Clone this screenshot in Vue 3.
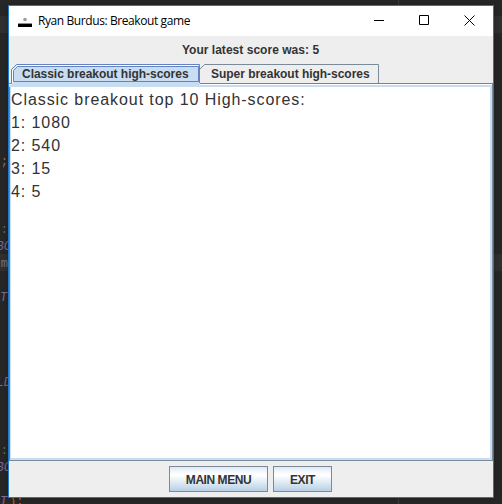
<script setup>
import { ref } from 'vue'

const code = {
  9: { text: ';', kind: 'orange' },
  13: { text: ':', kind: 'green' },
  14: { text: 'BC', kind: 'purple', clipped: true },
  15: { text: 'm', kind: 'plain' },
  17: { text: 'T', kind: 'purple', start: true },
  22: { text: 'LD', kind: 'purple', clipped: true },
  26: { text: ':', kind: 'green' },
  27: { text: 'BC', kind: 'purple', clipped: true },
  29: { text: 'T', kind: 'purple', start: true, tail: '):' },
}
const lines = Array.from({ length: 30 }, (_, i) => ({
  ...(code[i] || { text: '', kind: 'plain' }),
  current: i === 1 || i === 15,
}))

const tabs = [
  { title: 'Classic breakout high-scores', heading: 'Classic breakout top 10 High-scores:', scores: [1080, 540, 15, 5] },
  { title: 'Super breakout high-scores', heading: 'Super breakout top 10 High-scores:', scores: [] },
]
const active = ref(0)
</script>

<template>
  <div class="desktop">
    <div class="editor" aria-hidden="true">
      <div v-for="(line, i) in lines" :key="i" class="line" :class="{ current: line.current, clipped: line.clipped, start: line.start }">
        <span :class="line.kind">{{ line.text }}</span><span v-if="line.tail" class="orange tail">{{ line.tail }}</span>
      </div>
      <div class="margin-guide"></div>
    </div>

    <main class="window">
      <header class="titlebar">
        <svg class="app-icon" width="16" height="16" viewBox="0 0 16 16">
          <circle cx="8" cy="5.5" r="1.8" fill="#a39a9e" />
          <rect x="1" y="9" width="14" height="1" fill="#909090" />
          <rect x="1" y="10" width="14" height="3" fill="#000" />
        </svg>
        <span class="title">Ryan Burdus: Breakout game</span>
        <div class="controls">
          <svg width="11" height="11" viewBox="0 0 11 11"><path d="M0 5.5H10" /></svg>
          <svg width="11" height="11" viewBox="0 0 11 11"><path d="M.5 .5H9.5V9.5H.5Z" /></svg>
          <svg width="11" height="11" viewBox="0 0 11 11"><path d="M.5 .5L10.5 10.5M10.5 .5L.5 10.5" /></svg>
        </div>
      </header>

      <div class="latest"><span>Your latest score was: 5</span></div>

      <nav class="tabs">
        <button class="tab first" @click="active = 0">
          <svg class="tab-frame" width="191" height="23" viewBox="0 0 191 23">
            <path d="M2 20V6L8 0H191V23H0V20Z" fill="#c8ddf2" />
            <path d="M0 19.5H2.5V5.5L7.5 .5H190.5V19" class="outer" />
            <path d="M3.5 19V6L8 1.5H189.5" class="shine" />
            <path d="M4.5 17.5V6.5L8.5 2.5H189.5V17.5Z" class="outer" />
            <path d="M0 20.5H2.5" class="shine" />
          </svg>
          <span class="tab-label">{{ tabs[0].title }}</span>
        </button>
        <button class="tab second" @click="active = 1">
          <svg class="tab-frame" width="180" height="20" viewBox="0 0 180 20">
            <path d="M.5 5.5L5.5 .5H179.5V19" class="idle" />
          </svg>
          <span class="tab-label">{{ tabs[1].title }}</span>
        </button>
      </nav>

      <section class="pane">
        <div class="scores">
          <div>{{ tabs[active].heading }}</div>
          <div v-for="(score, i) in tabs[active].scores" :key="i">{{ i + 1 }}: {{ score }}</div>
        </div>
      </section>

      <footer class="actions">
        <button class="metal menu"><span>MAIN MENU</span></button>
        <button class="metal exit"><span>EXIT</span></button>
      </footer>
    </main>
  </div>
</template>

<style>
body { margin: 0; overflow: hidden; }
</style>

<style scoped>
* { box-sizing: border-box; }
button { margin: 0; padding: 0; border: 0; background: none; color: #333; }
.desktop {
  position: relative;
  width: 502px;
  height: 504px;
  padding: 5px 8px 6px;
  overflow: hidden;
  background: #272727;
}
.editor {
  position: absolute;
  inset: -1px 0 0;
  overflow: hidden;
  font: 12px/20px "Liberation Mono", monospace;
}
.line { display: flex; height: 17px; white-space: pre; }
.line > span:first-child { width: 8px; display: flex; justify-content: flex-end; }
.line.start > span:first-child { justify-content: flex-start; }
.line.clipped > span:first-child { width: 11px; }
.line > .tail { width: auto; margin-left: 1px; }
.current { background: #303030; }
.purple { color: #80699a; font-style: italic; }
.orange { color: #b8692f; }
.green { color: #577350; }
.plain { color: #777; }
.margin-guide { position: absolute; left: 398px; top: 0; width: 1px; height: 100%; background: #3c3c3c; }

.window {
  position: relative;
  display: flex;
  flex-direction: column;
  width: 486px;
  height: 493px;
  border: 1px solid #1c7ad0;
  background: #eee;
  box-shadow: 0 0 7px rgba(0, 0, 0, .25);
  font-family: "Liberation Sans", Arial, sans-serif;
  color: #333;
}
.titlebar { display: flex; align-items: center; flex: none; height: 30px; padding-left: 8px; background: #fff; }
.app-icon { flex: none; margin-top: 2px; }
.title {
  margin-left: 5px;
  color: #000;
  font: 12px/16px "Open Sans", "Noto Sans", sans-serif;
  letter-spacing: -.41px;
  white-space: nowrap;
}
.controls { display: flex; gap: 34px; margin: -1px 18px 0 auto; }
.controls svg { fill: none; stroke: #000; stroke-width: 1; }
.latest {
  display: flex;
  justify-content: center;
  flex: none;
  height: 28px;
  padding: 6px 1px 0 0;
  font-size: 12px;
  line-height: 16px;
  font-weight: bold;
  letter-spacing: .03px;
}
.tabs { position: relative; z-index: 1; display: flex; flex: none; height: 19px; }
.tab { position: relative; height: 19px; font: bold 12px/21px "Liberation Sans", Arial, sans-serif; text-align: left; white-space: nowrap; letter-spacing: -.03px; }
.first { width: 190px; padding-left: 13px; }
.second { width: 180px; padding-left: 12px; }
.tab-frame { position: absolute; left: 0; top: 0; fill: none; }
.tab-label { position: relative; top: 0; }
.outer { stroke: #6382bf; }
.idle { stroke: #7a8a99; }
.shine { stroke: #fff; }
.pane {
  flex: none;
  height: 378px;
  border: 1px solid #7a8a99;
  border-top-color: #6382bf;
  border-left-color: #6382bf;
  padding: 1px 0 0;
  background: #fff;
}
.scores {
  height: 375px;
  border: 2px solid #c8ddf2;
  border-left-width: 1px;
  padding-top: 1px;
  font-size: 16px;
  line-height: 23px;
  letter-spacing: .92px;
  white-space: nowrap;
}
.actions { display: flex; gap: 5px; padding: 5px 0 0 160px; }
.metal {
  height: 26px;
  border: 1px solid #7a8a99;
  background: linear-gradient(#dde8f3 0%, #fff 30%, #fff 36%, #b8cfe5 100%);
  font: bold 12px/26px "Liberation Sans", Arial, sans-serif;
  letter-spacing: -.45px;
}
.menu { width: 99px; }
.exit { width: 59px; }
</style>
